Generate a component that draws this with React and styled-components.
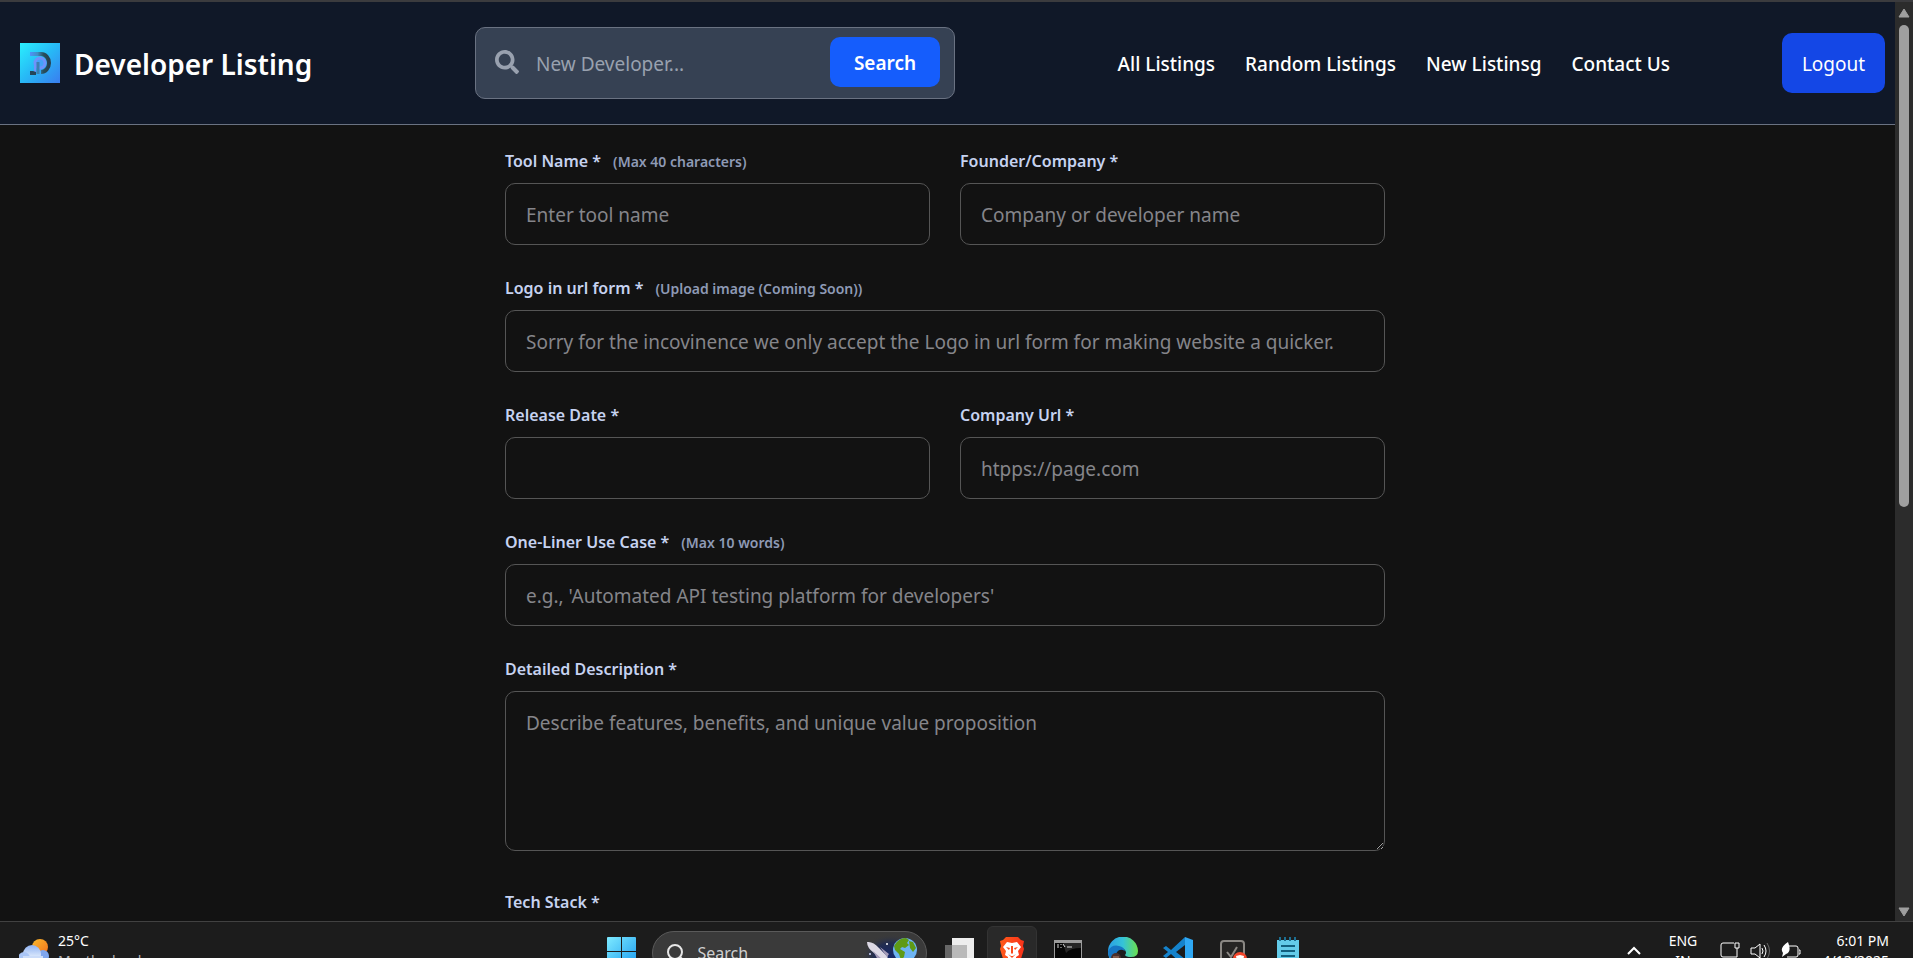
import { useId } from 'react';
import styled, { createGlobalStyle } from 'styled-components';
import { FaSearch } from 'react-icons/fa';

const GlobalStyle = createGlobalStyle`
  *,
  *::before,
  *::after {
    box-sizing: border-box;
  }

  body {
    margin: 0;
    background-color: #121212;
    color: #fff;
    font-family: 'Segoe UI', 'Noto Sans', 'Open Sans', sans-serif;
    font-size: 19px;
    line-height: 30px;
  }

  input,
  textarea,
  button {
    font: inherit;
  }
`;

const Desktop = styled.div`
  height: 100vh;
  display: flex;
  flex-direction: column;
  overflow: hidden;
  border-top: 2px solid #3b3b3e;
`;

const Viewport = styled.div`
  flex: 1;
  min-height: 0;
  display: flex;
`;

const Page = styled.div`
  flex: 1;
  min-width: 0;
  overflow: hidden;
`;

/* header */

const Header = styled.header`
  display: grid;
  grid-template-columns: 455px 480px 1fr auto;
  align-items: center;
  padding: 25px 10px 25px 20px;
  background-color: #101828;
  border-bottom: 1px solid #6a7282;
`;

const Brand = styled.a`
  display: flex;
  align-items: center;
  gap: 14px;
  color: #fff;
  font-size: 28px;
  font-weight: 600;
  text-decoration: none;
`;

const BrandName = styled.span`
  padding-top: 2px;
`;

const SearchForm = styled.form`
  display: flex;
  align-items: center;
  height: 72px;
  padding: 0 14px 0 19px;
  background-color: #364153;
  border: 1px solid #6a7282;
  border-radius: 10px;

  svg {
    flex: none;
    color: #99a1af;
    margin-bottom: 2px;
  }
`;

const SearchInput = styled.input`
  flex: 1;
  min-width: 0;
  margin-left: 17px;
  padding: 2px 0 0;
  border: 0;
  outline: 0;
  background: transparent;
  color: #fff;

  &::placeholder {
    color: #99a1af;
    opacity: 1;
  }
`;

const SearchBtn = styled.button`
  width: 110px;
  height: 50px;
  margin-bottom: 2px;
  padding: 2px 0 0;
  border: 0;
  border-radius: 10px;
  background-color: #155dfc;
  color: #fff;
  font-weight: 600;
`;

const Nav = styled.nav`
  display: flex;
  justify-content: flex-end;
  gap: 30px;
  padding: 2px 112px 0 0;
`;

const NavLink = styled.a`
  color: #fff;
  font-weight: 500;
  text-decoration: none;
  white-space: nowrap;
`;

const LogoutBtn = styled.button`
  width: 103px;
  height: 60px;
  padding: 2px 0 0;
  border: 0;
  border-radius: 10px;
  background-color: #1447e6;
  color: #fff;
`;

/* form */

const Main = styled.main`
  padding: 23px 45px 0 40px;
`;

const ToolForm = styled.form`
  display: grid;
  grid-template-columns: 1fr 1fr;
  gap: 30px;
  max-width: 880px;
  margin: 0 auto;
`;

const FieldBox = styled.div`
  grid-column: ${({ $wide }) => ($wide ? '1 / -1' : 'auto')};
  display: flex;
  flex-direction: column;
  gap: 10px;
`;

const Label = styled.label`
  padding-top: 2px;
  color: #c6d2f0;
  font-size: 16px;
  font-weight: 600;
  line-height: 23px;
`;

const Hint = styled.span`
  margin-left: 12px;
  color: #8e9ab5;
  font-size: 14px;
  line-height: 20px;
`;

const Input = styled.input`
  width: 100%;
  padding: 16px 20px 14px;
  border: 1px solid #555;
  border-radius: 10px;
  background-color: transparent;
  color: #fff;

  &::placeholder {
    color: #85858a;
    opacity: 1;
  }
`;

const TextArea = styled(Input)`
  height: 160px;
  margin-bottom: 8px;
  resize: vertical;
`;

/* scrollbar */

const Scrollbar = styled.div`
  width: 18px;
  display: flex;
  flex-direction: column;
  align-items: center;
  padding: 6px 0 4px;
  background-color: #2c2c2c;
`;

const Thumb = styled.div`
  width: 10px;
  flex: 0 0 53%;
  margin: 7px 0 auto;
  border-radius: 5px;
  background-color: #9f9f9f;
`;

/* taskbar */

const Taskbar = styled.footer`
  flex: none;
  height: 37px;
  display: grid;
  grid-template-columns: 1fr auto 1fr;
  overflow: hidden;
  border-top: 1px solid #414141;
  background-color: #1c1c1c;
  font-size: 14px;
  line-height: 20px;
`;

const Weather = styled.div`
  display: flex;
  gap: 9px;
  padding: 9px 0 0 19px;

  svg {
    flex: none;
    margin-top: 8px;
  }
`;

const Muted = styled.div`
  color: #b5b5b5;
`;

const Apps = styled.div`
  display: flex;
  align-items: flex-start;
  padding-right: 4px;
`;

const AppBtn = styled.button`
  width: ${({ $active }) => ($active ? 50 : 55)}px;
  height: 56px;
  padding: 10px 0 0;
  margin: 4px ${({ $active }) => ($active ? 4 : 0)}px 0 0;
  display: flex;
  justify-content: center;
  align-items: flex-start;
  border: 1px solid ${({ $active }) => ($active ? '#333' : 'transparent')};
  border-radius: 6px;
  background-color: ${({ $active }) => ($active ? '#292929' : 'transparent')};
`;

const TaskSearch = styled.label`
  width: 275px;
  height: 44px;
  margin: 9px 5px 0 3px;
  padding-left: 14px;
  display: flex;
  align-items: center;
  border: 1px solid #5a5a5a;
  border-radius: 22px;
  background-color: #3a3a3a;
  overflow: hidden;

  svg {
    flex: none;
  }
`;

const TaskSearchInput = styled.input`
  flex: 1;
  min-width: 0;
  padding: 0;
  margin-left: 13px;
  border: 0;
  background: transparent;
  color: #fff;
  font-size: 16px;

  &::placeholder {
    color: #cfcfcf;
    opacity: 1;
  }
`;

const Tray = styled.div`
  display: flex;
  justify-content: flex-end;
  align-items: flex-start;
  padding: 9px 24px 0 0;

  svg {
    flex: none;
    margin-top: 8px;
  }
`;

const Language = styled.div`
  width: 34px;
  margin: 0 20px 0 24px;
  text-align: center;
`;

const TrayIcons = styled.div`
  display: flex;
  gap: 9px;
`;

const Clock = styled.div`
  width: 88px;
  text-align: right;
`;

const Logo = () => (
  <svg width="40" height="40" viewBox="0 0 40 40" aria-hidden="true">
    <defs>
      <linearGradient id="logoBg" x1="0" y1="0" x2="1" y2="1">
        <stop offset="0" stopColor="#2af0fd" />
        <stop offset="0.5" stopColor="#27b8f6" />
        <stop offset="1" stopColor="#3a7df0" />
      </linearGradient>
      <linearGradient id="logoRing" x1="0" y1="0" x2="1" y2="0">
        <stop offset="0" stopColor="#4f93fa" />
        <stop offset="0.4" stopColor="#3f8fc4" />
        <stop offset="0.7" stopColor="#27505f" />
        <stop offset="1" stopColor="#28404e" />
      </linearGradient>
    </defs>
    <rect width="40" height="40" fill="url(#logoBg)" />
    <path d="M10 11h11a8 9 0 0 1 0 18" fill="none" stroke="url(#logoRing)" strokeWidth="4" />
    <circle cx="20" cy="20" r="5" fill="#45a2f7" stroke="#6f93fb" strokeWidth="3" />
    <path d="M15 30V20" stroke="#6f93fb" strokeWidth="2" />
    <path d="M18 19v12" stroke="#3d7fb0" strokeWidth="3" />
    <path d="M10 28h3l3 1v3h-6z" fill="#24465a" />
  </svg>
);

const WeatherIcon = () => (
  <svg width="30" height="30" viewBox="0 0 30 30" aria-hidden="true">
    <defs>
      <linearGradient id="sun" x1="0" y1="0" x2="1" y2="1">
        <stop offset="0" stopColor="#f9b92c" />
        <stop offset="1" stopColor="#f0701d" />
      </linearGradient>
      <linearGradient id="cloud" x1="0" y1="0" x2="0" y2="1">
        <stop offset="0" stopColor="#8fb2f2" />
        <stop offset="0.6" stopColor="#d5e4fb" />
      </linearGradient>
    </defs>
    <circle cx="21" cy="8" r="8" fill="url(#sun)" />
    <circle cx="24" cy="17" r="6" fill="#7fa6ee" />
    <circle cx="13" cy="15" r="9" fill="url(#cloud)" />
    <circle cx="5" cy="19" r="6" fill="#a9c5f6" />
    <path d="M4 17h20v12H4z" fill="#cbdcf9" />
  </svg>
);

const WindowsIcon = () => (
  <svg width="29" height="29" viewBox="0 0 29 29" aria-hidden="true">
    <defs>
      <linearGradient id="win" x1="0" y1="0" x2="1" y2="1">
        <stop offset="0" stopColor="#7eeaff" />
        <stop offset="1" stopColor="#1c9cf0" />
      </linearGradient>
    </defs>
    <path d="M0 1q0-1 1-1h13v14H0zM15 0h13q1 0 1 1v13H15zM0 15h14v14H0zM15 15h14v14H15z" fill="url(#win)" />
  </svg>
);

const SpaceArt = () => (
  <svg width="64" height="42" viewBox="0 0 64 42" aria-hidden="true">
    <defs>
      <radialGradient id="space">
        <stop offset="0" stopColor="#15276b" />
        <stop offset="0.6" stopColor="#1d2a55" stopOpacity="0.8" />
        <stop offset="1" stopColor="#3a3a3a" stopOpacity="0" />
      </radialGradient>
    </defs>
    <ellipse cx="29" cy="24" rx="29" ry="22" fill="url(#space)" />
    <path d="M5 10q6-1 12 6l9 9-4 4-10-8q-7-5-7-11z" fill="#dcd8e4" />
    <path d="M11 19l5 9 4-1zM18 15l9 7-2 3z" fill="#a49bb8" />
    <circle cx="25" cy="12" r="1" fill="#fff" />
    <circle cx="8" cy="22" r="1" fill="#cfd6ff" />
    <circle cx="27" cy="29" r="1" fill="#cfd6ff" />
    <circle cx="43" cy="18" r="12" fill="#6db4f4" />
    <path d="M34 11q4-5 10-5l3 2-2 3 2 2-4 3-3-1-2 2 5 3-1 5-3 3-2-6-4-4-1-4z" fill="#5f9a16" />
    <path d="M47 9l4 1 3 6-3 4-3-4z" fill="#5f9a16" />
  </svg>
);

const TaskViewIcon = () => (
  <svg width="31" height="28" viewBox="0 0 31 28" aria-hidden="true">
    <path d="M8 1h22v21H8z" fill="#ededed" />
    <path d="M1 8h22v18H1z" fill="#7a7a7a" fillOpacity="0.8" />
    <path d="M8 8h15v14H8z" fill="#b9b9b9" />
  </svg>
);

const BraveIcon = () => (
  <svg width="26" height="30" viewBox="0 0 26 30" aria-hidden="true">
    <defs>
      <linearGradient id="brave" x1="0" y1="0" x2="1" y2="0">
        <stop offset="0" stopColor="#ff5a1a" />
        <stop offset="1" stopColor="#f9331a" />
      </linearGradient>
    </defs>
    <path d="M7 0h12l3 3 3 1-1 5 1 3-4 13-8 5-8-5L1 12l1-3-1-5 3-1z" fill="url(#brave)" />
    <path
      d="M8 5l5 1 5-1 4 5-3 4 1 4-3 2 0 2-4 4-4-4 0-2-3-2 1-4-3-4z"
      fill="#fff"
    />
    <path d="M7 10l4 1-1 2zM19 10l-4 1 1 2zM12 9h2v7l-1 1-1-1zM9 17l3 2h2l3-2-4 4z" fill="#fb4a1c" />
  </svg>
);

const TerminalIcon = () => (
  <svg width="28" height="27" viewBox="0 0 28 27" aria-hidden="true">
    <path d="M0 3h28v24H0z" fill="#9b9b9b" />
    <path d="M1 6h26v20H1z" fill="#050505" />
    <path d="M27 6v5Q16 11 12 16L9 6z" fill="#262626" />
    <path d="M3 8h2M3 10h2M7 7v1M7 10v1M9 7l2 3M13 10h5" stroke="#d8d8d8" fill="none" />
  </svg>
);

const EdgeIcon = () => (
  <svg width="30" height="30" viewBox="0 0 30 30" aria-hidden="true">
    <defs>
      <linearGradient id="edge" x1="0" y1="0" x2="1" y2="0">
        <stop offset="0" stopColor="#2a9fe4" />
        <stop offset="0.5" stopColor="#35c3d8" />
        <stop offset="1" stopColor="#6be04c" />
      </linearGradient>
    </defs>
    <path d="M0 15a15 15 0 0 1 30-1q0 6-7 6-5 0-6-2 2-2 0-5-4-4-9 0-4 3-3 12Q0 22 0 15z" fill="url(#edge)" />
    <path d="M0 14q4-7 11-5 5 1 6 5-5-3-8 1-3 5 2 14Q1 26 0 14z" fill="#1676c4" />
    <circle cx="8" cy="21" r="5" fill="#4b2f2b" />
    <path d="M5 20h6M6 23h4" stroke="#b98a72" />
  </svg>
);

const VsCodeIcon = () => (
  <svg width="30" height="30" viewBox="0 0 30 30" aria-hidden="true">
    <path d="M22 0L8 13 3 9 0 11l5 4-5 4 3 2 5-4 14 13z" fill="#1583cc" />
    <path d="M22 0l8 3v24l-8 3z" fill="#2fa8f4" />
    <path d="M22 8v14l-9-7z" fill="#1c1c1c" />
  </svg>
);

const CheckAppIcon = () => (
  <svg width="27" height="30" viewBox="0 0 27 30" aria-hidden="true">
    <rect x="1" y="4" width="23" height="24" rx="3" fill="#262524" stroke="#8a8783" strokeWidth="2" />
    <path d="M7 15l4 5 6-10" fill="none" stroke="#8a8783" strokeWidth="2" />
    <circle cx="20" cy="22" r="7" fill="#f2452a" />
    <path d="M16 19l4-1 4 1-1 5-3 2-3-2z" fill="#fff" />
  </svg>
);

const NotepadIcon = () => (
  <svg width="22" height="30" viewBox="0 0 22 30" aria-hidden="true">
    <path d="M0 3h22v27H0z" fill="#63cbe9" />
    <path d="M3 0v4M8 0v4M13 0v4M18 0v4" stroke="#1c6f92" strokeWidth="2" />
    <path d="M4 9h14M4 14h14M4 19h14" stroke="#12607f" strokeWidth="2" />
  </svg>
);

const fields = [
  {
    label: 'Tool Name *',
    hint: '(Max 40 characters)',
    placeholder: 'Enter tool name',
  },
  { label: 'Founder/Company *', placeholder: 'Company or developer name' },
  {
    label: 'Logo in url form *',
    hint: '(Upload image (Coming Soon))',
    placeholder:
      'Sorry for the incovinence we only accept the Logo in url form for making website a quicker.',
    wide: true,
  },
  { label: 'Release Date *', placeholder: '' },
  { label: 'Company Url *', placeholder: 'htpps://page.com' },
  {
    label: 'One-Liner Use Case *',
    hint: '(Max 10 words)',
    placeholder: "e.g., 'Automated API testing platform for developers'",
    wide: true,
  },
  {
    label: 'Detailed Description *',
    placeholder: 'Describe features, benefits, and unique value proposition',
    wide: true,
    multiline: true,
  },
  { label: 'Tech Stack *', placeholder: '', wide: true },
];

const Field = ({ label, hint, placeholder, wide, multiline }) => {
  const id = useId();

  return (
    <FieldBox $wide={wide}>
      <Label htmlFor={id}>
        {label}
        {hint && <Hint>{hint}</Hint>}
      </Label>
      {multiline ? (
        <TextArea as="textarea" id={id} placeholder={placeholder} />
      ) : (
        <Input id={id} type="text" placeholder={placeholder} />
      )}
    </FieldBox>
  );
};

const SiteHeader = () => (
  <Header>
    <Brand href="#">
      <Logo />
      <BrandName>Developer Listing</BrandName>
    </Brand>
    <SearchForm role="search">
      <FaSearch size={24} aria-hidden="true" />
      <SearchInput type="text" aria-label="Search developers" placeholder="New Developer..." />
      <SearchBtn type="button">Search</SearchBtn>
    </SearchForm>
    <Nav>
      <NavLink href="#">All Listings</NavLink>
      <NavLink href="#">Random Listings</NavLink>
      <NavLink href="#">New Listinsg</NavLink>
      <NavLink href="#">Contact Us</NavLink>
    </Nav>
    <LogoutBtn type="button">Logout</LogoutBtn>
  </Header>
);

const PageScrollbar = () => (
  <Scrollbar aria-hidden="true">
    <svg width="12" height="10" viewBox="0 0 12 10">
      <path d="M6 1l5 8H1z" fill="#9f9f9f" stroke="#9f9f9f" strokeLinejoin="round" />
    </svg>
    <Thumb />
    <svg width="12" height="10" viewBox="0 0 12 10">
      <path d="M6 9L1 1h10z" fill="#9f9f9f" stroke="#9f9f9f" strokeLinejoin="round" />
    </svg>
  </Scrollbar>
);

const SystemTaskbar = () => (
  <Taskbar>
    <Weather>
      <WeatherIcon />
      <div>
        <div>25°C</div>
        <Muted>Mostly cloudy</Muted>
      </div>
    </Weather>
    <Apps>
      <AppBtn aria-label="Start">
        <WindowsIcon />
      </AppBtn>
      <TaskSearch>
        <svg width="18" height="18" viewBox="0 0 18 18" aria-hidden="true">
          <circle cx="8" cy="8" r="7" fill="none" stroke="#e6e6e6" strokeWidth="2" />
          <path d="M13 13l4 4" stroke="#e6e6e6" strokeWidth="2" />
        </svg>
        <TaskSearchInput type="text" aria-label="Search" placeholder="Search" />
        <SpaceArt />
      </TaskSearch>
      <AppBtn aria-label="Task view">
        <TaskViewIcon />
      </AppBtn>
      <AppBtn aria-label="Brave" $active>
        <BraveIcon />
      </AppBtn>
      <AppBtn aria-label="Terminal">
        <TerminalIcon />
      </AppBtn>
      <AppBtn aria-label="Edge">
        <EdgeIcon />
      </AppBtn>
      <AppBtn aria-label="VS Code">
        <VsCodeIcon />
      </AppBtn>
      <AppBtn aria-label="Tasks">
        <CheckAppIcon />
      </AppBtn>
      <AppBtn aria-label="Notepad">
        <NotepadIcon />
      </AppBtn>
    </Apps>
    <Tray>
      <svg width="16" height="20" viewBox="0 0 16 20" aria-hidden="true">
        <path d="M2 15l6-6 6 6" fill="none" stroke="#fff" strokeWidth="2" />
      </svg>
      <Language>
        <div>ENG</div>
        <div>IN</div>
      </Language>
      <TrayIcons>
        <svg width="21" height="22" viewBox="0 0 21 22" aria-hidden="true">
          <path
            d="M14 4H3q-2 0-2 2v10q0 2 2 2h14M6 21h9M15 4h4v5h-4zM17 9v9"
            fill="none"
            stroke="#fff"
          />
        </svg>
        <svg width="21" height="22" viewBox="0 0 21 22" aria-hidden="true">
          <path
            d="M1 9h4l5-4v14l-5-4H1zM12 9q2 3 0 6M14 6q4 6 0 12"
            fill="none"
            stroke="#fff"
          />
          <path d="M17 4q5 8 0 16" fill="none" stroke="#666" />
        </svg>
        <svg width="21" height="22" viewBox="0 0 21 22" aria-hidden="true">
          <path d="M9 7h7q2 0 2 2v7q0 2-2 2H7M19 11h1v4h-1" fill="none" stroke="#fff" />
          <path d="M8 3q4 10-2 12l-4 3 1-4Q-1 9 8 3z" fill="#fff" />
        </svg>
      </TrayIcons>
      <Clock>
        <div>6:01 PM</div>
        <div>4/13/2025</div>
      </Clock>
    </Tray>
  </Taskbar>
);

const App = () => {
  return (
    <>
      <GlobalStyle />
      <Desktop>
        <Viewport>
          <Page>
            <SiteHeader />
            <Main>
              <ToolForm>
                {fields.map((field) => (
                  <Field key={field.label} {...field} />
                ))}
              </ToolForm>
            </Main>
          </Page>
          <PageScrollbar />
        </Viewport>
        <SystemTaskbar />
      </Desktop>
    </>
  );
};

export default App;
